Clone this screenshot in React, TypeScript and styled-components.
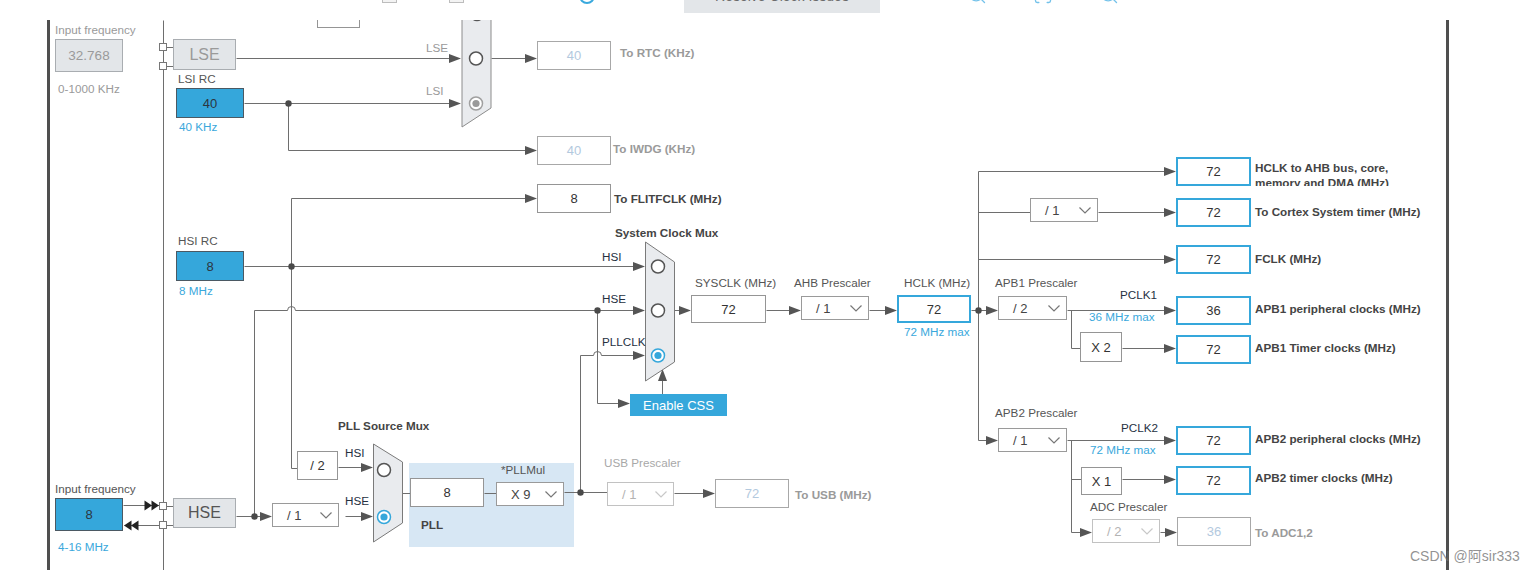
import React from 'react'
import styled, { createGlobalStyle, css } from 'styled-components'
import { ZoomIn, ZoomOut, Scan } from 'lucide-react'

// canvas origin in page coordinates (left border ends at 50, toolbar ends at 20)
const OX = 50
const OY = 20

const GlobalStyle = createGlobalStyle`
  html, body { margin: 0; padding: 0; background: #fff; }
  body { font-family: "Liberation Sans", Arial, sans-serif; }
`

const Page = styled.div`
  position: relative;
  width: 1536px;
  height: 570px;
  overflow: hidden;
  background: #fff;
  font-family: "Liberation Sans", Arial, "Noto Sans CJK SC", sans-serif;
`

const Toolbar = styled.div`
  height: 20px;
  overflow: hidden;
`

const ToolRow = styled.div`
  display: flex;
  align-items: flex-start;
  height: 28px;
  margin-top: -15px;
`

const ToolCheck = styled.span<{ $ml: number }>`
  margin-left: ${p => p.$ml}px;
  margin-top: 3px;
  width: 15px;
  height: 15px;
  box-sizing: border-box;
  border: 1px solid #bdbdbd;
  background: #f3f3f3;
  flex: none;
`

const ToolRadio = styled.span<{ $ml: number }>`
  margin-left: ${p => p.$ml}px;
  margin-top: 3px;
  width: 16px;
  height: 16px;
  box-sizing: border-box;
  border: 2px solid #3aa9dd;
  border-radius: 50%;
  flex: none;
`

const ToolButton = styled.span<{ $ml: number }>`
  margin-left: ${p => p.$ml}px;
  width: 196px;
  height: 28px;
  box-sizing: border-box;
  padding-bottom: 6px;
  background: #e3e6e9;
  color: #6b6b6b;
  font-size: 14px;
  display: flex;
  align-items: center;
  justify-content: center;
  flex: none;
`

const ToolIcon = styled.span<{ $ml: number }>`
  margin-left: ${p => p.$ml}px;
  color: #74c2ea;
  display: flex;
  flex: none;
`

const Canvas = styled.div`
  position: relative;
  margin-left: 47px;
  width: 1396px;
  height: 550px;
  border-left: 3px solid #4f4f4f;
  border-right: 3px solid #4f4f4f;
  overflow: hidden;
`

const Wires = styled.svg`
  position: absolute;
  left: 0;
  top: 0;
`

interface Pos {
  $x: number
  $y: number
  $w?: number
  $h?: number
}

const place = css<Pos>`
  position: absolute;
  left: ${p => p.$x - OX}px;
  top: ${p => p.$y - OY}px;
  width: ${p => (p.$w != null ? `${p.$w}px` : 'auto')};
  height: ${p => (p.$h != null ? `${p.$h}px` : 'auto')};
`

type Kind = 'osc' | 'gray' | 'source' | 'plain' | 'out' | 'off'

const kinds: Record<Kind, string> = {
  osc: 'background:#35a7db; border:1px solid #4b5963; color:#2c3640;',
  gray: 'background:#e3e6e9; border:1px solid #a9adb1; color:#9a9a9a;',
  source: 'background:#e3e6e9; border:1px solid #a9adb1; color:#555;',
  plain: 'background:#fff; border:1px solid #959595; color:#333;',
  out: 'background:#fff; border:2px solid #35a7db; color:#333;',
  off: 'background:#fff; border:1px solid #a8a8a8; color:#b3c9de;',
}

const Box = styled.div<Pos & { $kind: Kind; $size?: number }>`
  ${place}
  box-sizing: border-box;
  display: flex;
  align-items: center;
  justify-content: center;
  font-size: ${p => p.$size ?? 13}px;
  ${p => kinds[p.$kind]}
`

const SelectBox = styled.div<Pos & { $off?: boolean }>`
  ${place}
  box-sizing: border-box;
  display: flex;
  align-items: center;
  justify-content: space-between;
  padding: 0 6px 0 14px;
  background: #fff;
  border: 1px solid ${p => (p.$off ? '#c2c2c2' : '#9a9a9a')};
  color: ${p => (p.$off ? '#b3b3b3' : '#444')};
  font-size: 13px;
`

const PllZone = styled.div<Pos>`
  ${place}
  background: #d7e7f4;
`

const CssButton = styled.div<Pos>`
  ${place}
  background: #35a7db;
  color: #fff;
  font-size: 13px;
  display: flex;
  align-items: center;
  justify-content: center;
`

type Tone = 'muted' | 'dark' | 'blue' | 'bold' | 'boldMuted' | 'signal' | 'disabled'

const tones: Record<Tone, string> = {
  muted: 'color:#9a9a9a;',
  dark: 'color:#555;',
  blue: 'color:#3aa8dc;',
  bold: 'color:#444; font-weight:700;',
  boldMuted: 'color:#9a9a9a; font-weight:700;',
  signal: 'color:#26313f;',
  disabled: 'color:#a8a8a8;',
}

const Label = styled.span<Pos & { $tone: Tone }>`
  ${place}
  font-size: 11.7px;
  line-height: 14px;
  white-space: nowrap;
  ${p => tones[p.$tone]}
`

const OutLabel = styled.div<Pos>`
  ${place}
  overflow: hidden;
  font-size: 11.7px;
  line-height: 15px;
  padding-top: 3px;
  box-sizing: border-box;
  color: #444;
  font-weight: 700;
`

const Watermark = styled.span`
  position: absolute;
  left: 1410px;
  top: 545px;
  font-size: 14px;
  color: rgba(110, 110, 110, 0.75);
  white-space: nowrap;
`

const Chevron = ({ off }: { off?: boolean }) => (
  <svg width="12" height="7" viewBox="0 0 12 7">
    <polyline points="0.5,0.5 6,6 11.5,0.5" fill="none" stroke={off ? '#c8c8c8' : '#777'} strokeWidth="1.2" />
  </svg>
)

const boxes: { x: number; y: number; w: number; h: number; kind: Kind; text: string; size?: number }[] = [
  { x: 317, y: 12, w: 43, h: 16, kind: 'plain', text: '' },
  { x: 55, y: 39, w: 68, h: 33, kind: 'gray', text: '32.768', size: 13.5 },
  { x: 173, y: 39, w: 63, h: 31, kind: 'gray', text: 'LSE', size: 16 },
  { x: 176, y: 88, w: 68, h: 30, kind: 'osc', text: '40' },
  { x: 176, y: 251, w: 68, h: 30, kind: 'osc', text: '8' },
  { x: 55, y: 498, w: 68, h: 33, kind: 'osc', text: '8' },
  { x: 173, y: 498, w: 63, h: 30, kind: 'source', text: 'HSE', size: 16 },
  { x: 537, y: 41, w: 74, h: 29, kind: 'off', text: '40' },
  { x: 537, y: 136, w: 74, h: 29, kind: 'off', text: '40' },
  { x: 537, y: 184, w: 74, h: 29, kind: 'plain', text: '8' },
  { x: 691, y: 295, w: 75, h: 28, kind: 'plain', text: '72' },
  { x: 897, y: 295, w: 74, h: 28, kind: 'out', text: '72' },
  { x: 1080, y: 332, w: 42, h: 30, kind: 'plain', text: 'X 2' },
  { x: 1081, y: 467, w: 41, h: 28, kind: 'plain', text: 'X 1' },
  { x: 1176, y: 157, w: 75, h: 29, kind: 'out', text: '72' },
  { x: 1176, y: 198, w: 75, h: 29, kind: 'out', text: '72' },
  { x: 1176, y: 245, w: 75, h: 29, kind: 'out', text: '72' },
  { x: 1176, y: 296, w: 75, h: 29, kind: 'out', text: '36' },
  { x: 1176, y: 335, w: 75, h: 29, kind: 'out', text: '72' },
  { x: 1176, y: 426, w: 75, h: 29, kind: 'out', text: '72' },
  { x: 1176, y: 466, w: 75, h: 29, kind: 'out', text: '72' },
  { x: 1177, y: 517, w: 74, h: 29, kind: 'off', text: '36' },
  { x: 297, y: 451, w: 41, h: 29, kind: 'plain', text: '/ 2' },
  { x: 410, y: 478, w: 74, h: 29, kind: 'plain', text: '8' },
  { x: 715, y: 479, w: 74, h: 29, kind: 'off', text: '72' },
]

const selects: { x: number; y: number; w: number; text: string; off?: boolean }[] = [
  { x: 801, y: 296, w: 68, text: '/ 1' },
  { x: 1030, y: 198, w: 68, text: '/ 1' },
  { x: 998, y: 296, w: 69, text: '/ 2' },
  { x: 998, y: 428, w: 69, text: '/ 1' },
  { x: 1092, y: 519, w: 68, text: '/ 2', off: true },
  { x: 272, y: 503, w: 67, text: '/ 1' },
  { x: 496, y: 482, w: 68, text: 'X 9' },
  { x: 607, y: 482, w: 67, text: '/ 1', off: true },
]

const labels: [number, number, string, Tone][] = [
  [55, 23, 'Input frequency', 'muted'],
  [58, 82, '0-1000 KHz', 'muted'],
  [178, 72, 'LSI RC', 'dark'],
  [179, 120, '40 KHz', 'blue'],
  [426, 41, 'LSE', 'muted'],
  [426, 84, 'LSI', 'muted'],
  [620, 46, 'To RTC (KHz)', 'boldMuted'],
  [613, 142, 'To IWDG (KHz)', 'boldMuted'],
  [614, 192, 'To FLITFCLK (MHz)', 'bold'],
  [178, 234, 'HSI RC', 'dark'],
  [179, 284, '8 MHz', 'blue'],
  [615, 226, 'System Clock Mux', 'bold'],
  [602, 250, 'HSI', 'signal'],
  [602, 292, 'HSE', 'signal'],
  [602, 335, 'PLLCLK', 'signal'],
  [695, 276, 'SYSCLK (MHz)', 'dark'],
  [794, 276, 'AHB Prescaler', 'dark'],
  [904, 276, 'HCLK (MHz)', 'dark'],
  [904, 325, '72 MHz max', 'blue'],
  [995, 276, 'APB1 Prescaler', 'dark'],
  [1120, 288, 'PCLK1', 'signal'],
  [1089, 310, '36 MHz max', 'blue'],
  [995, 406, 'APB2 Prescaler', 'dark'],
  [1121, 421, 'PCLK2', 'signal'],
  [1090, 443, '72 MHz max', 'blue'],
  [1090, 500, 'ADC Prescaler', 'dark'],
  [1255, 205, 'To Cortex System timer (MHz)', 'bold'],
  [1255, 252, 'FCLK (MHz)', 'bold'],
  [1255, 302, 'APB1 peripheral clocks (MHz)', 'bold'],
  [1255, 341, 'APB1 Timer clocks (MHz)', 'bold'],
  [1255, 432, 'APB2 peripheral clocks (MHz)', 'bold'],
  [1255, 471, 'APB2 timer clocks (MHz)', 'bold'],
  [1255, 526, 'To ADC1,2', 'boldMuted'],
  [338, 419, 'PLL Source Mux', 'bold'],
  [345, 446, 'HSI', 'signal'],
  [345, 494, 'HSE', 'signal'],
  [501, 463, '*PLLMul', 'dark'],
  [421, 518, 'PLL', 'bold'],
  [604, 456, 'USB Prescaler', 'disabled'],
  [795, 488, 'To USB (MHz)', 'boldMuted'],
  [55, 482, 'Input frequency', 'dark'],
  [58, 540, '4-16 MHz', 'blue'],
]

const wirePaths = [
  'M163 20 V570',
  'M166 47 H173', 'M166 66 H173', 'M166 506 H173', 'M166 525 H173',
  'M236 58 H452',
  'M244 103 H452',
  'M288 103 V150 H528',
  'M491 58 H528',
  'M291 198 H528', 'M291 198 V468 H297',
  'M244 266 H636',
  'M254 516 V310 H287 a4 4 0 0 1 8 0 H636',
  'M597 310 V403 H621',
  'M580 492 V355 H593 a4 4 0 0 1 8 0 H636',
  'M662 394 V378',
  'M674 310 H682', 'M766 310 H792', 'M869 310 H888', 'M971 310 H989',
  'M978 171 V440 H989',
  'M978 171 H1167', 'M978 212 H1030', 'M1098 212 H1167', 'M978 259 H1167',
  'M1067 310 H1167', 'M1071 310 V348 H1080', 'M1122 348 H1167',
  'M1067 440 H1167', 'M1071 440 V532 H1083', 'M1071 479 H1081', 'M1122 479 H1167', 'M1160 532 H1168',
  'M338 467 H364', 'M345 516 H364', 'M236 516 H263',
  'M402 493 H410', 'M484 493 H496', 'M564 492 H607', 'M674 493 H706',
  'M123 505 H159', 'M124 525 H159',
]

const rightTips: [number, number][] = [
  [461, 58], [461, 103], [537, 58], [537, 150], [537, 198],
  [645, 266], [645, 310], [645, 355], [630, 403],
  [691, 310], [801, 310], [897, 310], [998, 310], [998, 440],
  [1176, 171], [1176, 212], [1176, 259], [1176, 310], [1176, 348],
  [1176, 440], [1176, 479], [1092, 532], [1177, 532],
  [373, 467], [373, 516], [272, 516], [715, 493],
]

const dots: [number, number][] = [
  [288, 103], [291, 266], [597, 310], [978, 310], [254, 516], [580, 492],
]

const head = (x: number, y: number, d: 'r' | 'l' | 'u', len = 12, half = 4.5) => {
  if (d === 'r') return `${x},${y} ${x - len},${y - half} ${x - len},${y + half}`
  if (d === 'l') return `${x},${y} ${x + len},${y - half} ${x + len},${y + half}`
  return `${x},${y} ${x - half},${y + len} ${x + half},${y + len}`
}

const Radio = ({ cx, cy, on, blue }: { cx: number; cy: number; on?: boolean; blue?: boolean }) => {
  const ring = blue ? '#35a7db' : on ? '#a0a0a0' : '#555'
  return (
    <g>
      <circle cx={cx} cy={cy} r={6.5} fill="#fff" stroke={ring} strokeWidth={1.5} />
      {on && <circle cx={cx} cy={cy} r={3.6} fill={blue ? '#35a7db' : '#9a9a9a'} />}
    </g>
  )
}

const Wiring = () => (
  <Wires width={1396} height={550} viewBox={`${OX} ${OY} 1396 550`}>
    <g transform="translate(0.5 0.5)">
      {wirePaths.map((d, i) => (
        <path key={i} d={d} fill="none" stroke="#6e6e6e" strokeWidth={1} />
      ))}
    </g>
    {rightTips.map(([x, y], i) => (
      <polygon key={i} points={head(x, y + 0.5, 'r')} fill="#555" />
    ))}
    <polygon points={head(662.5, 369, 'u')} fill="#555" />
    <polygon points={head(152, 505.5, 'r', 7.5, 5)} fill="#222" />
    <polygon points={head(159, 505.5, 'r', 7.5, 5)} fill="#222" />
    <polygon points={head(124, 525.5, 'l', 7.5, 5)} fill="#222" />
    <polygon points={head(131, 525.5, 'l', 7.5, 5)} fill="#222" />
    {dots.map(([x, y], i) => (
      <circle key={i} cx={x + 0.5} cy={y + 0.5} r={3.2} fill="#4a4a4a" />
    ))}
    {[[159, 43], [159, 62], [159, 502], [159, 521]].map(([x, y], i) => (
      <rect key={i} x={x + 0.5} y={y + 0.5} width={7} height={7} fill="#fff" stroke="#777" />
    ))}

    <polygon points="462,-12 491,6 491,108 462,127" fill="#e9ebee" stroke="#8c8c8c" />
    <Radio cx={477} cy={14} />
    <Radio cx={476} cy={58.5} />
    <Radio cx={476} cy={103.5} on />

    <polygon points="645.5,242 674.5,262 674.5,362 645.5,381" fill="#e9ebee" stroke="#7a7a7a" />
    <Radio cx={658} cy={266.5} />
    <Radio cx={658} cy={310.5} />
    <Radio cx={658} cy={355.5} on blue />

    <polygon points="373.5,444 402.5,462 402.5,523 373.5,542" fill="#e9ebee" stroke="#7a7a7a" />
    <Radio cx={384} cy={470} />
    <Radio cx={384} cy={517} on blue />
  </Wires>
)

export default function App() {
  return (
    <Page>
      <GlobalStyle />
      <Toolbar>
        <ToolRow>
          <ToolCheck $ml={382} />
          <ToolCheck $ml={52} />
          <ToolRadio $ml={115} />
          <ToolButton $ml={89}>Resolve Clock Issues</ToolButton>
          <ToolIcon $ml={87}>
            <ZoomIn size={20} strokeWidth={1.6} />
          </ToolIcon>
          <ToolIcon $ml={46}>
            <Scan size={20} strokeWidth={1.6} />
          </ToolIcon>
          <ToolIcon $ml={46}>
            <ZoomOut size={20} strokeWidth={1.6} />
          </ToolIcon>
        </ToolRow>
      </Toolbar>

      <Canvas>
        <PllZone $x={409} $y={463} $w={165} $h={84} />
        <Wiring />

        {boxes.map((b, i) => (
          <Box key={i} $x={b.x} $y={b.y} $w={b.w} $h={b.h} $kind={b.kind} $size={b.size}>
            {b.text}
          </Box>
        ))}

        {selects.map((s, i) => (
          <SelectBox key={i} $x={s.x} $y={s.y} $w={s.w} $h={24} $off={s.off}>
            <span>{s.text}</span>
            <Chevron off={s.off} />
          </SelectBox>
        ))}

        <CssButton $x={630} $y={394} $w={97} $h={22}>
          Enable CSS
        </CssButton>

        {labels.map(([x, y, text, tone], i) => (
          <Label key={i} $x={x} $y={y} $tone={tone}>
            {text}
          </Label>
        ))}

        <OutLabel $x={1255} $y={157} $w={180} $h={29}>
          HCLK to AHB bus, core,
          <br />
          memory and DMA (MHz)
        </OutLabel>
      </Canvas>

      <Watermark>CSDN @阿sir333</Watermark>
    </Page>
  )
}
